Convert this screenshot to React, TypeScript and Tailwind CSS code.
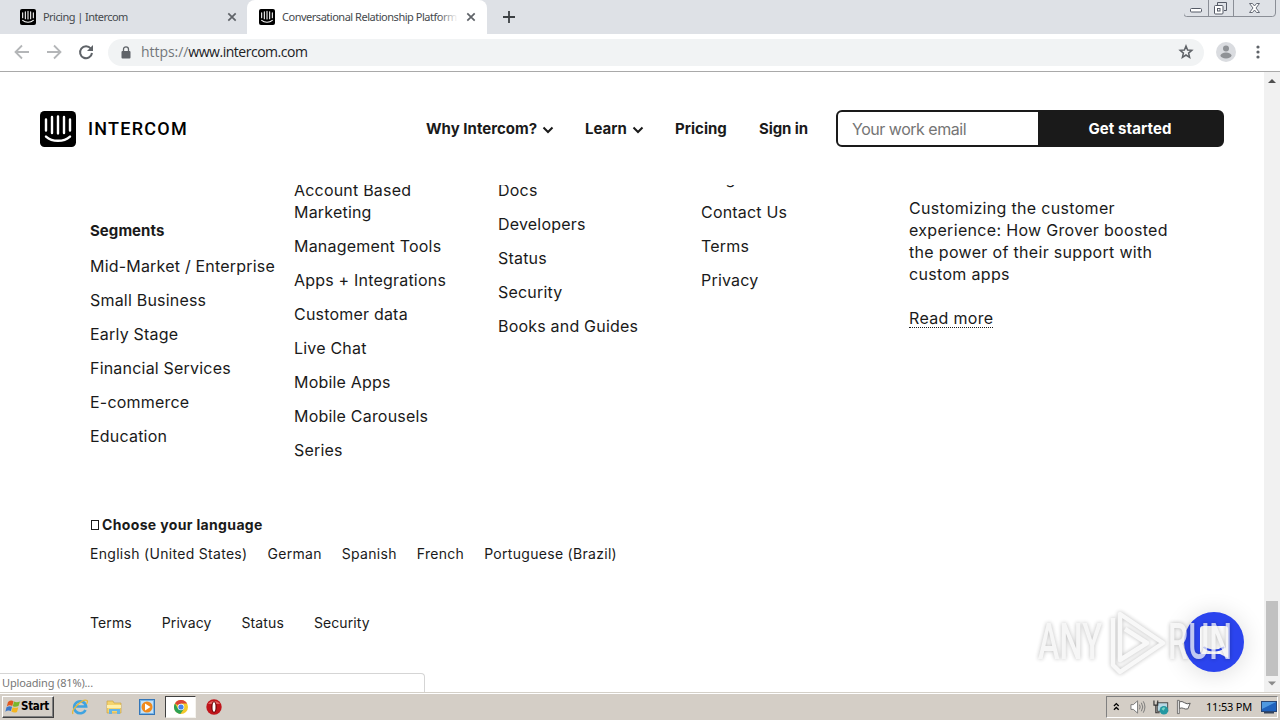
import React from 'react';

interface Column {
  className: string;
  heading?: string;
  items: string[];
}

const columns: Column[] = [
  {
    className: 'pt-[53px] w-[204px]',
    heading: 'Segments',
    items: ['Mid-Market / Enterprise', 'Small Business', 'Early Stage', 'Financial Services', 'E-commerce', 'Education'],
  },
  {
    className: 'pt-3 w-[204px] pr-9',
    items: ['Account Based Marketing', 'Management Tools', 'Apps + Integrations', 'Customer data', 'Live Chat', 'Mobile Apps', 'Mobile Carousels', 'Series'],
  },
  {
    className: 'pt-3 w-[203px]',
    items: ['Docs', 'Developers', 'Status', 'Security', 'Books and Guides'],
  },
  {
    className: 'w-[208px]',
    items: ['Blog', 'Contact Us', 'Terms', 'Privacy'],
  },
];

const languages = ['English (United States)', 'German', 'Spanish', 'French', 'Portuguese (Brazil)'];
const legalLinks = ['Terms', 'Privacy', 'Status', 'Security'];

const IntercomMark: React.FC<{className: string}> = ({className}) => (
  <svg viewBox="0 0 36 36" className={className}>
    <rect width="36" height="36" rx="4.5" fill="#000" />
    <g stroke="#fff" strokeWidth="2.4" strokeLinecap="round" fill="none">
      <path d="M6 8.500v11M12 6v16M18 5.400v17M24 6v16M30 8.500v11" />
      <path d="M6 25.600c6.400 5.600 17.600 5.600 24 0" />
    </g>
  </svg>
);

const CloseIcon = () => (
  <svg viewBox="0 0 10 10" className="w-[10px] h-[10px] shrink-0">
    <path d="M1.300 1.300l7.400 7.400M8.700 1.300L1.300 8.700" stroke="#5f6368" strokeWidth="1.700" />
  </svg>
);

const Chevron = () => (
  <svg viewBox="0 0 12 8" className="w-3 h-2 ml-[5px]">
    <path d="M1.500 1.500L6 6l4.500-4.500" stroke="#1a1a1a" strokeWidth="2" fill="none" />
  </svg>
);

const TabStrip = () => (
  <div className="relative flex h-[34px] shrink-0 bg-[#dee1e6] text-[11px] text-[#45494d] font-['Noto_Sans',sans-serif]">
    <div className="flex items-center w-[247px] pl-5 pr-[10px]">
      <IntercomMark className="w-4 h-4 mr-[7px]" />
      <span className="flex-1 tracking-[-0.55px]">Pricing | Intercom</span>
      <CloseIcon />
    </div>
    <div className="flex items-center w-[240px] pl-3 pr-[11px] bg-white rounded-t-lg">
      <IntercomMark className="w-4 h-4 mr-[7px] shrink-0" />
      <div className="relative w-[176px] overflow-hidden whitespace-nowrap tracking-[-0.48px] mr-2">
        Conversational Relationship Platform
        <div className="absolute inset-y-0 right-0 w-5 bg-gradient-to-r from-white/0 to-white" />
      </div>
      <CloseIcon />
    </div>
    <div className="flex items-center pl-4">
      <svg viewBox="0 0 12 12" className="w-3 h-3">
        <path d="M6 0v12M0 6h12" stroke="#3c4043" strokeWidth="1.800" />
      </svg>
    </div>
    <svg viewBox="0 0 96 18" className="absolute right-0 top-0 w-24 h-[18px]" fill="none">
      <path d="M-.5 0v13q0 3.500 3 3.500h86q3 0 3-3.500V0M24.500 0v16M49.500 0v16" stroke="#8a8e96" />
      <rect x="6.500" y="8.500" width="11" height="3.500" rx="1" fill="#fff" stroke="#555a66" />
      <path d="M33.500 5V2.500h9v8H40" stroke="#555a66" />
      <rect x="30.500" y="5.500" width="8.500" height="8.500" rx="1" fill="#fff" stroke="#555a66" />
      <rect x="33.500" y="8.500" width="2.500" height="2.500" stroke="#555a66" />
      <path d="M65.500 3.500h3l2 2.500 2-2.500h3L72 8l3.500 4.500h-3l-2-2.500-2 2.500h-3L69 8z" fill="#fff" stroke="#666b76" />
    </svg>
  </div>
);

const Toolbar = () => (
  <div className="flex items-center h-[38px] shrink-0 border-b border-[#a9a9a9] bg-white pl-3.5 pb-px">
    <svg viewBox="0 0 80 16" className="w-20 h-4 mr-3.5" fill="none">
      <g stroke="#b4b6b8" strokeWidth="1.800">
        <path d="M15 8H2M8 1.500L1.500 8 8 14.500" />
        <path d="M33 8h13M40 1.500L46.500 8 40 14.500" />
      </g>
      <path d="M76.800 4.500A6 6 0 1 0 78 9" stroke="#5f6368" strokeWidth="2" />
      <path d="M79 1v6h-6z" fill="#5f6368" />
    </svg>
    <div className="flex items-center h-[27px] w-[1096px] rounded-full bg-[#f1f3f4] pl-[13px] pr-[10px]">
      <svg viewBox="0 0 10 13" className="w-[10px] h-[13px] mr-[10px]">
        <rect x=".5" y="5" width="9" height="7.500" rx="1" fill="#5f6368" />
        <path d="M2.500 5.500V3.300a2.500 2.500 0 0 1 5 0v2.200" stroke="#5f6368" strokeWidth="1.300" fill="none" />
      </svg>
      <span className="flex-1 pb-px font-['Open_Sans',sans-serif] text-[14px] text-[#202124] tracking-[-0.48px]">
        <span className="text-[#73777b] tracking-[-0.05px]">https://</span>www.intercom.com
      </span>
      <svg viewBox="0 0 16 16" className="w-4 h-4" fill="none">
        <path d="M8 2l1.600 4 4.200.3-3.200 2.800 1 4.200L8 11l-3.600 2.300 1-4.200-3.200-2.800 4.200-.3z" stroke="#5f6368" strokeWidth="1.500" />
      </svg>
    </div>
    <svg viewBox="0 0 20 20" className="w-5 h-5 ml-3">
      <circle cx="10" cy="10" r="10" fill="#dadce0" />
      <circle cx="10" cy="6.500" r="3" fill="#8f9296" />
      <ellipse cx="10" cy="13.500" rx="5.500" ry="3" fill="#8f9296" />
    </svg>
    <svg viewBox="0 0 4 14" className="w-1 h-3.5 ml-5">
      <circle cx="2" cy="2" r="1.600" fill="#5f6368" />
      <circle cx="2" cy="7" r="1.600" fill="#5f6368" />
      <circle cx="2" cy="12" r="1.600" fill="#5f6368" />
    </svg>
  </div>
);

const SiteHeader = () => (
  <header className="flex items-center h-[113px] shrink-0 pl-10 text-[15px] font-bold text-[#1a1a1a]">
    <IntercomMark className="w-9 h-9" />
    <span className="w-[338px] ml-3 font-['Roboto',sans-serif] font-medium text-[18px] tracking-[1.25px] text-black">INTERCOM</span>
    <nav className="flex items-center w-[410px] pt-0.5 whitespace-nowrap tracking-[0.020px]">
      <span className="flex items-center w-[159px]">Why Intercom?<Chevron /></span>
      <span className="flex items-center w-[90px]">Learn<Chevron /></span>
      <span className="w-[84px]">Pricing</span>
      <span className="tracking-[-0.1px]">Sign in</span>
    </nav>
    <div className="flex w-[388px] h-[37px] rounded-md border-2 border-[#1a1a1a] bg-[#1a1a1a] overflow-hidden">
      <div className="flex items-center w-[200px] pl-3.5 pt-px bg-white font-normal text-[16px] text-[#757575] tracking-[-0.48px]">Your work email</div>
      <div className="flex-1 flex items-center justify-center pt-px text-white tracking-[0.1px]">Get started</div>
    </div>
  </header>
);

const FooterColumn: React.FC<Column> = ({className, heading, items}) => (
  <div className={className}>
    {heading && <h3 className="mb-[13px] text-[15px] font-bold tracking-[0.05px]">{heading}</h3>}
    <ul className="flex flex-col gap-3">
      {items.map((item) => <li key={item}>{item}</li>)}
    </ul>
  </div>
);

const Footer = () => (
  <footer className="flex-1 overflow-hidden pl-[90px] text-[#1a1a1a]">
    <div className="flex h-[346px] -mt-[18px] text-[16px] leading-[22px] tracking-[0.2px]">
      {columns.map((column) => <FooterColumn key={column.items[0]} {...column} />)}
      <div className="w-[270px] pt-[30px] tracking-[0.32px]">
        <p>Customizing the customer experience: How Grover boosted the power of their support with custom apps</p>
        <a className="inline-block mt-[22px] h-[21px] leading-[22px] border-b border-dotted border-[#1a1a1a]">Read more</a>
      </div>
    </div>
    <h4 className="flex items-center h-[22px] text-[14px] font-bold tracking-[0.35px]">
      <span className="w-2 h-[10px] mt-0.5 ml-px mr-[3px] border border-[#1a1a1a]" />
      Choose your language
    </h4>
    <div className="flex gap-5 mt-2 h-[22px] text-[14px] leading-[22px] tracking-[0.3px]">
      {languages.map((language) => <span key={language}>{language}</span>)}
    </div>
    <div className="flex gap-[30px] mt-[47px] h-[22px] text-[14px] leading-[22px] tracking-[0.1px]">
      {legalLinks.map((link) => <span key={link}>{link}</span>)}
    </div>
  </footer>
);

const Scrollbar = () => (
  <div className="flex flex-col items-center w-4 shrink-0 bg-[#f1f1f1]">
    <svg viewBox="0 0 16 17" className="w-4 h-[17px]"><path d="M4 11l4-4 4 4z" fill="#505050" /></svg>
    <div className="flex-1" />
    <div className="w-3 h-[75px] bg-[#c1c1c1]" />
    <svg viewBox="0 0 16 16" className="w-4 h-4"><path d="M4 5.500l4 4 4-4z" fill="#8a8a8a" /></svg>
  </div>
);

const Messenger = () => (
  <div className="absolute left-[1184px] top-[540px] flex items-center justify-center w-[60px] h-[60px] rounded-full bg-[#2b44ee] shadow-[0_2px_24px_rgba(0,0,0,0.14)]">
    <svg viewBox="0 0 30 34" className="w-[30px] h-[34px]">
      <path d="M4 1h22q3 0 3 3v29l-8-4H4q-3 0-3-3V4q0-3 3-3z" fill="#fff" />
      <path d="M5.500 22.500c5 4 14 4 19 0" stroke="#2b44ee" strokeWidth="2" fill="none" strokeLinecap="round" />
    </svg>
  </div>
);

const Watermark = () => (
  <svg viewBox="0 0 200 72" className="absolute left-[1034px] top-[532px] w-[200px] h-[72px] opacity-75 drop-shadow-[0_0_2px_rgba(0,0,0,0.35)]">
    <g fill="#f4f4f4" fontFamily="Roboto, sans-serif" fontWeight="500" fontSize="50">
      <text x="4" y="55" textLength="64" lengthAdjust="spacingAndGlyphs">ANY</text>
      <text x="134" y="55" textLength="64" lengthAdjust="spacingAndGlyphs">RUN</text>
    </g>
    <path d="M79 14v47l7 7 43-29-43-29v46l27-17-22-14" fill="none" strokeLinejoin="round" stroke="#f6f6f6" strokeWidth="4.500" />
  </svg>
);

const Taskbar = () => (
  <div className="flex items-center h-7 shrink-0 border-t border-[#d4d0c8] bg-[#d4cec6] shadow-[inset_0_1px_0_#fff] px-0.5 pt-px text-black">
    <div className="flex items-center w-[52px] h-[22px] pl-[2px] border border-l-white border-t-white border-r-[#404040] border-b-[#404040] shadow-[inset_-1px_-1px_0_#808080]">
      <svg viewBox="0 0 16 16" className="w-4 h-4 shrink-0">
        <path d="M3 3q3-2.500 5.500-.8L7.300 7Q4.500 5.500 1.800 7.500z" fill="#e2581f" />
        <path d="M9 2.500q2.500 1.500 6 0L13.500 7q-3 1.500-5.700.2z" fill="#7ab62c" />
        <path d="M1.500 8.300q3-2 5.600-.5L5.900 12Q3 10.800.3 12.700z" fill="#3c78c9" />
        <path d="M7.600 8.200q3 1.300 5.700 0L12 13q-3 1.300-5.600-.5z" fill="#f4b51f" />
      </svg>
      <span className="text-[11.500px] font-bold tracking-[-0.3px] font-['DejaVu_Sans_Condensed','DejaVu_Sans',sans-serif]">Start</span>
    </div>
    <div className="flex items-center ml-[17px]">
      <svg viewBox="0 0 18 18" className="w-[18px] h-[18px]" fill="none">
        <path d="M14.500 12a6 6 0 1 1 .6-3.500H5" stroke="#3fa3e0" strokeWidth="2.600" />
        <path d="M2 16C-.5 12 12 0 16 2.500c1 1 .5 2-.5 3.500" stroke="#e6b83a" strokeWidth="1.300" />
      </svg>
      <svg viewBox="0 0 18 18" className="w-[18px] h-[18px] ml-4">
        <path d="M2 3h6l1 2h7v10H2z" fill="#f5d36c" stroke="#c8a347" strokeWidth=".7" />
        <path d="M2 7h14v3H2z" fill="#fff0ab" />
        <path d="M4 16v-5h11v5h-3v-3H7v3z" fill="#64b4e6" />
      </svg>
      <svg viewBox="0 0 16 16" className="w-4 h-4 ml-4">
        <rect x=".5" y=".5" width="15" height="15" fill="#77b5e8" stroke="#3476b8" />
        <rect x="2" y="2" width="12" height="12" fill="#c5e1f7" />
        <circle cx="8" cy="8" r="5.500" fill="#f08a1d" />
        <path d="M6 4.500v7L11.500 8z" fill="#fff" />
      </svg>
      <div className="flex items-center justify-center w-[31px] h-[22px] ml-[10px] bg-white border border-t-[#404040] border-l-[#404040] border-r-[#f5f3ee] border-b-[#f5f3ee]">
        <svg viewBox="0 0 14 14" className="w-3.5 h-3.5">
          <circle cx="7" cy="7" r="7" fill="#f3c92b" />
          <path d="M7 7L1 3.400A7 7 0 0 1 13.100 3.500H7z" fill="#dc4437" />
          <path d="M1 3.400A7 7 0 0 0 6.300 14L10 8.700 7 7 4 8.700z" fill="#2da155" />
          <circle cx="7" cy="7" r="3.300" fill="#fff" />
          <circle cx="7" cy="7" r="2.600" fill="#4582ec" />
        </svg>
      </div>
      <svg viewBox="0 0 16 16" className="w-4 h-4 ml-[10px]">
        <circle cx="8" cy="8" r="7.700" fill="#c0151b" />
        <path d="M2 5a7 6 0 0 1 12 0z" fill="#e3605f" />
        <ellipse cx="8" cy="8" rx="2.800" ry="5.800" fill="#6f080b" />
        <ellipse cx="8" cy="8" rx="1.500" ry="4.800" fill="#fff" />
      </svg>
    </div>
    <div className="flex items-center h-[22px] w-[172px] ml-auto pl-[6px] border border-t-[#808080] border-l-[#808080] border-r-white border-b-white">
      <svg viewBox="0 0 7 9" className="w-[7px] h-[9px] mb-0.5" fill="none">
        <path d="M1 4l2.500-2.500L6 4M1 8l2.500-2.500L6 8" stroke="#000" strokeWidth="1.400" />
      </svg>
      <svg viewBox="0 0 17 16" className="w-[17px] h-4 ml-2.5" fill="none" stroke="#777">
        <path d="M1 5.500h2.500L8 1.500v13L3.500 10.500H1z" fill="#fff" />
        <path d="M10 5.500q1.500 2.500 0 5M12 3.500q3 4.500 0 9M14 2q3.500 6 0 12" />
      </svg>
      <svg viewBox="0 0 17 17" className="w-[17px] h-[17px] ml-[7px]">
        <rect x="4.500" y="3.500" width="11" height="9" fill="#b8d8e4" stroke="#444" />
        <path d="M1 1v5h4V1M3 6v8h4" fill="none" stroke="#333" strokeWidth="1.200" />
        <circle cx="11.500" cy="11.500" r="4.500" fill="#2398a2" />
        <path d="M9 10q2-3 4-1l-2 3z" fill="#78d2c1" />
      </svg>
      <svg viewBox="0 0 17 16" className="w-[17px] h-4 ml-[7px]">
        <path d="M3.500 2.500q3-1 5.500 1t6 .5L12.500 10q-3 .5-4.500-.5t-4.500 0z" fill="#fff" stroke="#555" />
        <path d="M1.500 1h2v14h-2z" fill="#eee" stroke="#555" strokeWidth=".8" />
      </svg>
      <span className="ml-[14px] whitespace-nowrap text-[11px] tracking-[-0.2px] font-['Noto_Sans',sans-serif]">11:53 PM</span>
      <svg viewBox="0 0 16 13" className="w-4 h-[13px] ml-[9px] shrink-0">
        <rect x=".5" y=".5" width="15" height="10" fill="#1f62bd" stroke="#294674" />
        <path d="M1 1h14L1 8z" fill="#4f99e1" />
        <path d="M3 11h10v1.500H3z" fill="#34435b" />
      </svg>
    </div>
  </div>
);

const App: React.FC = () => (
  <div className="flex flex-col w-[1280px] h-[720px] overflow-hidden bg-white font-['Inter','Liberation_Sans',sans-serif]">
    <TabStrip />
    <Toolbar />
    <main className="relative flex flex-1 min-h-0">
      <div className="flex flex-col flex-1 min-w-0">
        <SiteHeader />
        <Footer />
      </div>
      <Scrollbar />
      <Messenger />
      <Watermark />
      <div className="absolute left-0 bottom-0 flex items-center w-[425px] h-[19px] pl-0.5 bg-white border-t border-r border-[#d5d5d5] rounded-tr text-[11px] text-[#777] tracking-[-0.15px] font-['Noto_Sans',sans-serif]">
        Uploading (81%)...
      </div>
    </main>
    <Taskbar />
  </div>
);

export default App;
